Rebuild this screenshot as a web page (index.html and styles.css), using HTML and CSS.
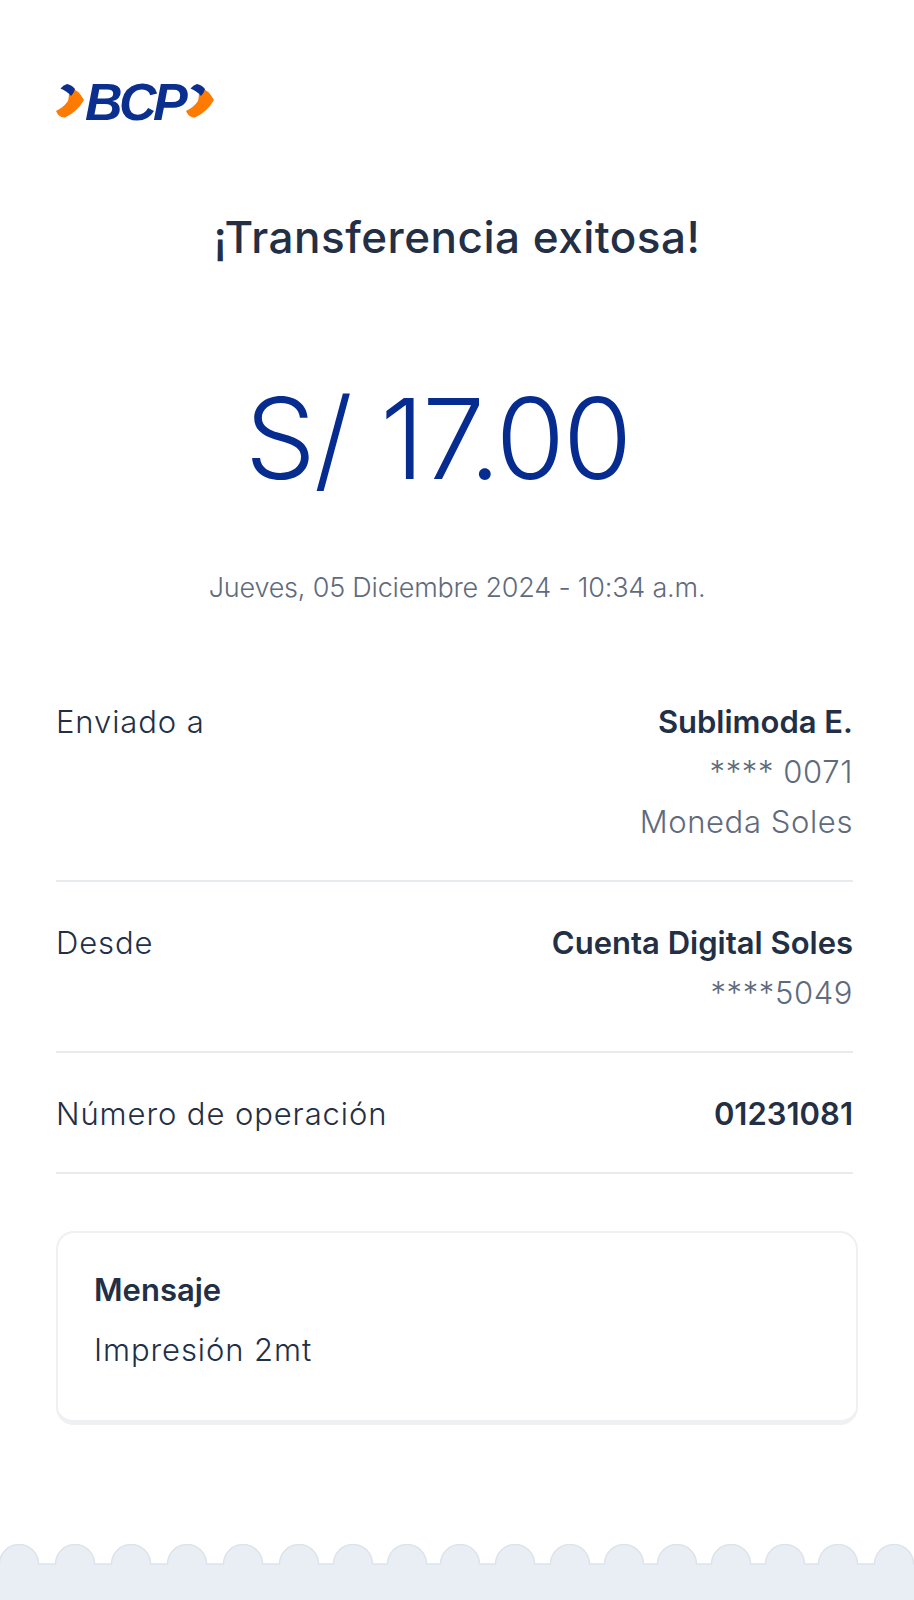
FILE: index.html
```html
<!DOCTYPE html>
<html>
<head>
    <title>Constancia</title>
    <link rel="stylesheet" href="styles.css">
</head>
<body>
    <div class="receipt">
        <div class="logo">
            <svg class="chevron" viewBox="0 0 28 38">
                <path d="M0 28 Q8 24 12 18 Q14 10 12 3 Q23 7 28 17 Q21 29 9 34.5 Q3 35 0 28 Z" fill="#ff7a00"/>
                <path d="M4.5 5.5 Q7 2 11 1 Q16 2 19 6 Q18 10 15 13 Q11 8 4.5 5.5 Z" fill="#0a2f8f"/>
            </svg>
            <span class="logo-text">BCP</span>
            <svg class="chevron" viewBox="0 0 28 38">
                <path d="M0 28 Q8 24 12 18 Q14 10 12 3 Q23 7 28 17 Q21 29 9 34.5 Q3 35 0 28 Z" fill="#ff7a00"/>
                <path d="M4.5 5.5 Q7 2 11 1 Q16 2 19 6 Q18 10 15 13 Q11 8 4.5 5.5 Z" fill="#0a2f8f"/>
            </svg>
        </div>
        <h1 class="title">¡Transferencia exitosa!</h1>
        <p class="amount">S/ 17.00</p>
        <p class="date">Jueves, 05 Diciembre 2024 - 10:34 a.m.</p>
        <div class="row row-first">
            <span class="label">Enviado a</span>
            <div class="values">
                <strong>Sublimoda E.</strong>
                <span>**** 0071</span>
                <span>Moneda Soles</span>
            </div>
        </div>
        <div class="row">
            <span class="label">Desde</span>
            <div class="values">
                <strong>Cuenta Digital Soles</strong>
                <span>****5049</span>
            </div>
        </div>
        <div class="row">
            <span class="label">Número de operación</span>
            <div class="values">
                <strong>01231081</strong>
            </div>
        </div>
        <div class="message">
            <strong>Mensaje</strong>
            <p>Impresión 2mt</p>
        </div>
    </div>
    <svg class="edge" width="914" height="56" viewBox="0 0 914 56">
        <path d="M-5 20 H-0.5 a19.5 19.5 0 0 1 39 0 H55.5 a19.5 19.5 0 0 1 39 0 H111.5 a19.5 19.5 0 0 1 39 0 H167.5 a19.5 19.5 0 0 1 39 0 H223.5 a19.5 19.5 0 0 1 39 0 H279.5 a19.5 19.5 0 0 1 39 0 H333.5 a19.5 19.5 0 0 1 39 0 H387.5 a19.5 19.5 0 0 1 39 0 H440.5 a19.5 19.5 0 0 1 39 0 H495.5 a19.5 19.5 0 0 1 39 0 H550.5 a19.5 19.5 0 0 1 39 0 H604.5 a19.5 19.5 0 0 1 39 0 H657.5 a19.5 19.5 0 0 1 39 0 H711.5 a19.5 19.5 0 0 1 39 0 H765.5 a19.5 19.5 0 0 1 39 0 H818.5 a19.5 19.5 0 0 1 39 0 H874.5 a19.5 19.5 0 0 1 39 0 H920 V70 H-5 Z" fill="#e9eef5" stroke="#dde3ea" stroke-width="1.5"/>
    </svg>
</body>
</html>
```

FILE: styles.css
```css
html, body {
    margin: 0;
    padding: 0;
}

body {
    width: 914px;
    height: 1600px;
    background-color: #fff;
    font-family: Inter, "Noto Sans", sans-serif;
    color: #232f45;
    display: flex;
    flex-direction: column;
    justify-content: space-between;
    overflow: hidden;
}

.receipt {
    padding: 80px 61px 0 56px;
    display: flex;
    flex-direction: column;
}

/* Logo */
.logo {
    display: flex;
    align-items: center;
    height: 44px;
}

.chevron {
    width: 28px;
    height: 38px;
}

.logo-text {
    width: 101px;
    margin-left: 1px;
    font-family: "Liberation Sans", sans-serif;
    font-size: 52px;
    line-height: 44px;
    font-weight: 700;
    font-style: italic;
    letter-spacing: -3.5px;
    color: #0a2f8f;
}

.title {
    margin: 85px -5px 0 0;
    text-align: center;
    font-size: 44px;
    font-weight: 500;
    line-height: 56px;
    letter-spacing: 0.5px;
}

.amount {
    margin: 103px 0 0;
    padding-right: 34px;
    text-align: center;
    font-size: 112px;
    font-weight: 300;
    line-height: 140px;
    letter-spacing: -2px;
    color: #062c90;
}

.date {
    margin: 62px -5px 0 0;
    text-align: center;
    font-size: 27px;
    font-weight: 300;
    line-height: 36px;
    letter-spacing: -0.2px;
    color: #5f6b7d;
}

/* Detail rows */
.row {
    display: flex;
    justify-content: space-between;
    padding: 36px 0 33px;
    border-bottom: 2px solid #e8ebee;
    font-size: 31px;
    line-height: 50px;
}

.row-first {
    margin-top: 91px;
    padding-top: 0;
}

.label {
    font-weight: 300;
    letter-spacing: 0.9px;
}

.values {
    display: flex;
    flex-direction: column;
    align-items: flex-end;
    font-weight: 300;
    letter-spacing: 0.6px;
    color: #5f6b7d;
}

.values strong {
    font-weight: 600;
    letter-spacing: 0;
    color: #232f45;
}

/* Message card */
.message {
    margin: 57px -5px 0 0;
    height: 194px;
    padding: 32px 36px;
    box-sizing: border-box;
    border: 2px solid #eff0f2;
    border-bottom-width: 5px;
    border-radius: 18px;
    font-size: 31px;
    line-height: 50px;
}

.message strong {
    font-weight: 600;
}

.message p {
    margin: 10px 0 0;
    font-weight: 300;
    letter-spacing: 0.9px;
}

.edge {
    display: block;
}
```
